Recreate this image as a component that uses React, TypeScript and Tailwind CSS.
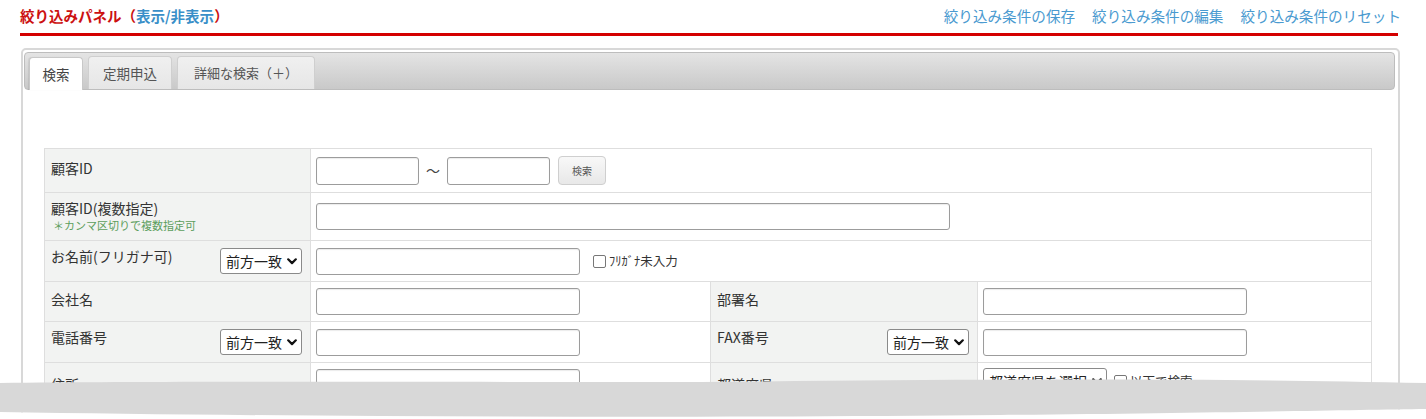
import React from "react";

const Chevron = () => (
  <svg width="10" height="7" viewBox="0 0 10 7" className="shrink-0">
    <path d="M1.2 1.3 L5 5.1 L8.8 1.3" fill="none" stroke="#111" strokeWidth="2.2" strokeLinecap="round" strokeLinejoin="round" />
  </svg>
);

const Select = ({ label, w = "w-[82px]" }: { label: string; w?: string }) => (
  <div className={`${w} h-[26px] shrink-0 border border-[#8a8a8a] rounded-[3px] bg-white flex items-center justify-between pl-[5px] pr-[4px] text-[14px] text-[#222] leading-none`}>
    <span>{label}</span>
    <Chevron />
  </div>
);

const Input = ({ w, h = "h-[27px]" }: { w: string; h?: string }) => (
  <div className={`${w} ${h} border border-[#9c9c9c] rounded-[3px] bg-white shadow-[inset_0_1px_1px_rgba(0,0,0,0.08)]`} />
);

const Label = ({ children, select }: { children: React.ReactNode; select?: string }) => (
  <td className="bg-[#f2f3f2] border border-[#dedede] align-middle px-[6px]">
    {select ? (
      <div className="flex justify-between items-start pr-[2px]">
        <span className="text-[14px] text-[#333] leading-[17px]">{children}</span>
        <Select label={select} />
      </div>
    ) : (
      <div className="text-[14px] text-[#333] leading-[17px] pb-[4px]">{children}</div>
    )}
  </td>
);

const Value = ({ children, span }: { children?: React.ReactNode; span?: number }) => (
  <td colSpan={span} className="border border-[#dedede] align-middle px-[5px] bg-white">
    <div className="flex items-center">{children}</div>
  </td>
);

export default function App() {
  return (
    <div className="relative w-[1426px] h-[419px] overflow-hidden bg-white font-['Noto_Sans_CJK_JP',sans-serif]">
      {/* header */}
      <div className="flex items-center justify-between w-[1401px] pl-[20px] h-[32px]">
        <div className="text-[14.5px] font-bold text-[#cc1111] leading-none">
          絞り込みパネル（<span className="text-[#3a8fc8]">表示/非表示</span>）
        </div>
        <div className="flex gap-[17px] text-[14.6px] text-[#4a9ad0] leading-none">
          <span>絞り込み条件の保存</span>
          <span>絞り込み条件の編集</span>
          <span>絞り込み条件のリセット</span>
        </div>
      </div>
      <div className="ml-[20px] mt-[1px] w-[1378px] h-[3px] bg-[#d40000]" />

      {/* panel */}
      <div className="ml-[21px] mt-[12px] w-[1379px] h-[400px] border-2 border-[#d8d8d8] rounded-[5px] pt-[2px] pl-[1px] pr-[3px]">
        <div className="h-[38px] border border-[#bdbdbd] rounded-[4px] bg-gradient-to-b from-[#e4e4e4] to-[#c9c9c9] flex items-end pl-[4px] gap-[5px]">
          <div className="w-[54px] h-[33px] -mb-[1px] bg-white border border-[#c8c8c8] border-b-0 rounded-t-[4px] flex items-center justify-center text-[13.5px] text-[#444] shadow-[-1px_0_1px_rgba(0,0,0,0.08)]">
            検索
          </div>
          <div className="w-[84px] h-[33px] bg-gradient-to-b from-[#f0f0f0] to-[#e6e6e6] border border-[#cfcfcf] border-b-0 rounded-t-[4px] flex items-center justify-center text-[13.5px] text-[#555]">
            定期申込
          </div>
          <div className="w-[138px] h-[33px] bg-gradient-to-b from-[#f0f0f0] to-[#e6e6e6] border border-[#cfcfcf] border-b-0 rounded-t-[4px] flex items-center justify-center text-[13px] text-[#555]">
            詳細な検索（＋）
          </div>
        </div>

        <div className="pl-[20px] pt-[58px]">
          <table className="w-[1327px] border-collapse table-fixed">
            <colgroup>
              <col className="w-[266px]" />
              <col className="w-[400px]" />
              <col className="w-[267px]" />
              <col className="w-[394px]" />
            </colgroup>
            <tbody>
              <tr className="h-[44px]">
                <Label>顧客ID</Label>
                <Value span={3}>
                  <Input w="w-[103px]" h="h-[28px]" />
                  <span className="mx-[7px] text-[14px] text-[#444]">～</span>
                  <Input w="w-[103px]" h="h-[28px]" />
                  <div className="ml-[8px] w-[48px] h-[29px] border border-[#cfcfcf] rounded-[4px] bg-gradient-to-b from-[#f8f8f8] to-[#e8e8e8] flex items-center justify-center text-[10px] text-[#555]">
                    検索
                  </div>
                </Value>
              </tr>
              <tr className="h-[48px]">
                <td className="bg-[#f2f3f2] border border-[#dedede] align-middle px-[6px]">
                  <div className="text-[14px] text-[#333] leading-[17px]">顧客ID(複数指定)</div>
                  <div className="text-[11px] text-[#5c9e5c] leading-[14px] mt-[1px] pl-[2px] pb-[2px]">＊カンマ区切りで複数指定可</div>
                </td>
                <Value span={3}>
                  <Input w="w-[634px]" />
                </Value>
              </tr>
              <tr className="h-[41px]">
                <Label select="前方一致">お名前(フリガナ可)</Label>
                <Value span={3}>
                  <Input w="w-[264px]" />
                  <div className="ml-[13px] w-[13px] h-[13px] border border-[#777] rounded-[2px] bg-white" />
                  <span className="ml-[3px] text-[12.5px] text-[#333]">ﾌﾘｶﾞﾅ未入力</span>
                </Value>
              </tr>
              <tr className="h-[40px]">
                <Label>会社名</Label>
                <Value>
                  <Input w="w-[264px]" />
                </Value>
                <Label>部署名</Label>
                <Value>
                  <Input w="w-[264px]" />
                </Value>
              </tr>
              <tr className="h-[41px]">
                <Label select="前方一致">電話番号</Label>
                <Value>
                  <Input w="w-[264px]" />
                </Value>
                <Label select="前方一致">FAX番号</Label>
                <Value>
                  <Input w="w-[264px]" />
                </Value>
              </tr>
              <tr className="h-[41px]">
                <td className="bg-[#f2f3f2] border border-[#dedede] align-top px-[6px] pt-[8px]">
                  <span className="text-[14px] text-[#333] leading-[17px]">住所</span>
                </td>
                <td className="border border-[#dedede] align-top px-[5px] pt-[6px]">
                  <Input w="w-[264px]" />
                </td>
                <td className="bg-[#f2f3f2] border border-[#dedede] align-top px-[6px] pt-[8px]">
                  <span className="text-[14px] text-[#333] leading-[17px]">都道府県</span>
                </td>
                <td className="border border-[#dedede] align-top px-[5px] pt-[5px]">
                  <div className="flex items-center">
                    <Select label="都道府県を選択" w="w-[124px]" />
                    <div className="ml-[7px] w-[13px] h-[13px] border border-[#777] rounded-[2px] bg-white" />
                    <span className="ml-[3px] text-[12.5px] text-[#333]">以下で検索</span>
                  </div>
                </td>
              </tr>
            </tbody>
          </table>
        </div>
      </div>

      {/* torn-paper edge of the screenshot */}
      <svg className="absolute left-0 top-[368px]" width="1426" height="51" viewBox="0 0 1426 51">
        <path d="M0 51 L0 44 C300 49 700 50 1000 47 C1200 45 1350 42 1426 41 L1426 51 Z" fill="#ffffff" />
        <path
          d="M0 15 C150 13 400 14 700 14 C950 12 1150 9 1426 15 L1426 41 C1350 42 1200 45 1000 47 C700 50 300 49 0 44 Z"
          fill="#d8d8d8"
        />
      </svg>
    </div>
  );
}
